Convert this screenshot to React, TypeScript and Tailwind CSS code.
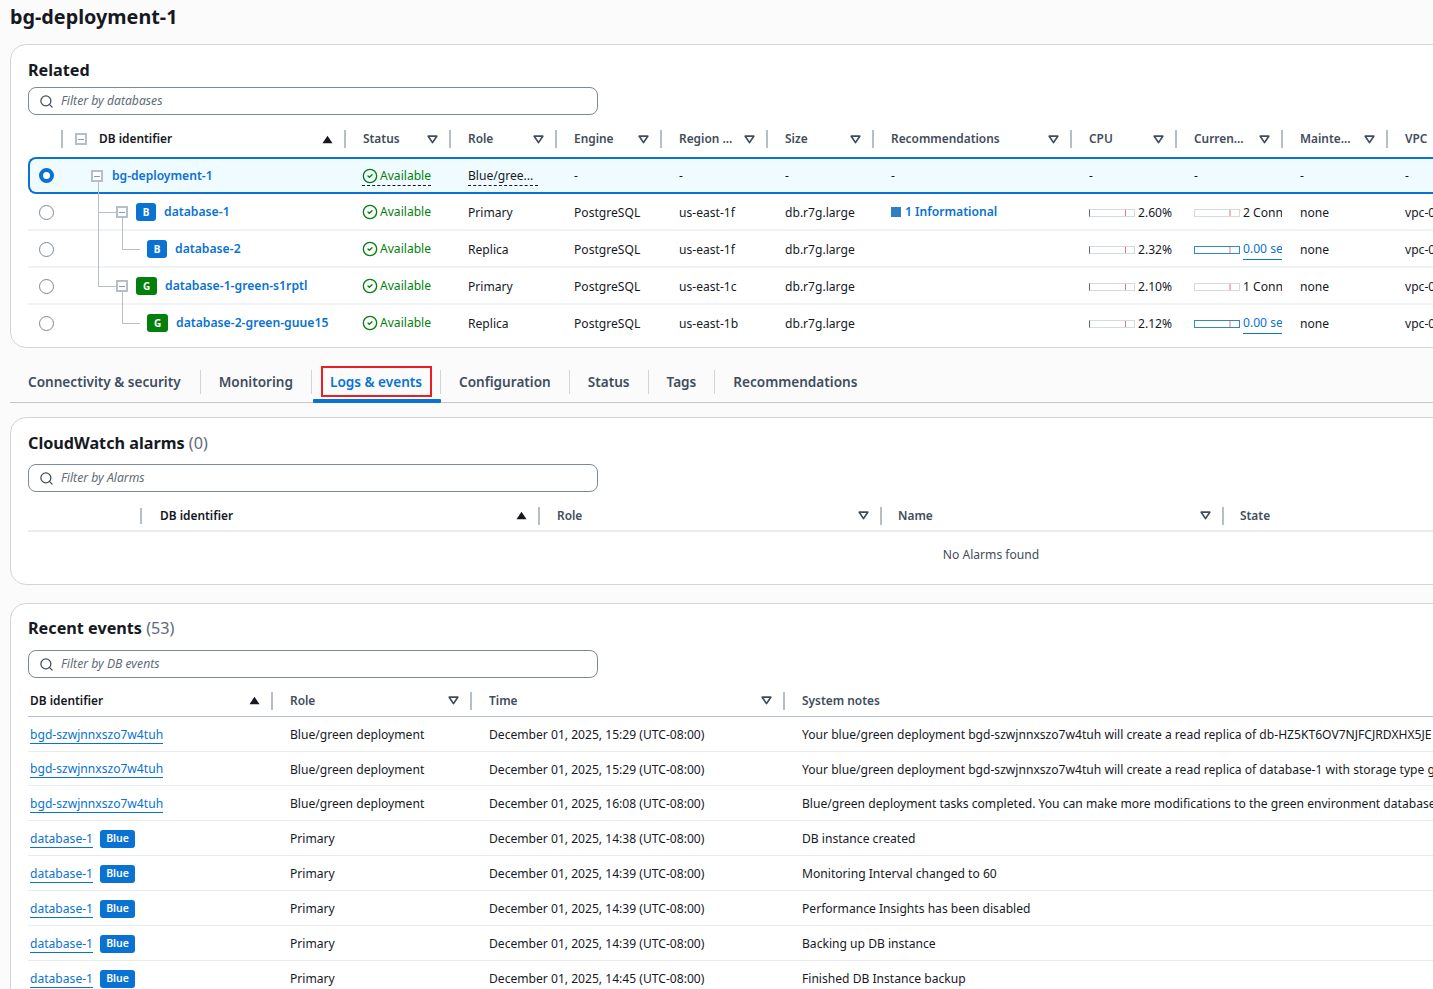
import { CircleCheck, Search } from "lucide-react"

const relatedCols = "grid grid-cols-[35px_282px_105px_106px_105px_106px_106px_198px_105px_106px_105px_200px]"
const alarmCols = "grid grid-cols-[114px_397px_342px_342px_200px]"
const eventCols = "grid grid-cols-[244px_199px_313px_900px]"

const FilterCaret = () => (
  <svg width="11" height="9" viewBox="0 0 11 9" className="shrink-0">
    <path d="M1.2 1.2h8.6L5.5 7.6z" fill="none" stroke="#414d5c" strokeWidth="1.7" strokeLinejoin="round" />
  </svg>
)

const SortCaret = () => (
  <svg width="11" height="9" viewBox="0 0 11 9" className="shrink-0">
    <path d="M5.5 .8l5 7.4H.5z" fill="#16191f" />
  </svg>
)

const Divider = () => <span className="-mr-px ml-[11px] h-[18px] w-[2px] shrink-0 bg-[#b6bec9]" />

const Head = ({ label, dark, sort, pl = "pl-[18px]", last }: { label: string; dark?: boolean; sort?: boolean; pl?: string; last?: boolean }) => (
  <div className={`flex h-full items-center ${pl}`}>
    <span className={`flex-1 truncate text-[11.9px] font-semibold ${dark ? "text-[#16191f]" : "text-[#414d5c]"}`}>{label}</span>
    {!last && (sort ? <SortCaret /> : <FilterCaret />)}
    {!last && <Divider />}
  </div>
)

const Filter = ({ text }: { text: string }) => (
  <div className="flex h-[28px] w-[570px] items-center gap-[7px] rounded-lg border border-[#7d8998] bg-white pl-[10px]">
    <Search size={15} strokeWidth={2} className="text-[#414d5c]" />
    <span className="pt-px text-[12.2px] italic text-[#5f6b7a]">{text}</span>
  </div>
)

const Minus = () => (
  <span className="relative z-10 flex h-[12px] w-[12px] shrink-0 items-center justify-center border-2 border-[#b6bec9] bg-white">
    <span className="h-px w-[6px] bg-[#8d99a8]" />
  </span>
)

const Radio = ({ on }: { on?: boolean }) =>
  on ? (
    <span className="ml-[9px] block h-[15px] w-[15px] rounded-full border-[4px] border-[#0972d3] bg-white" />
  ) : (
    <span className="ml-[11px] block h-[15px] w-[15px] rounded-full border border-[#7d8998] bg-white" />
  )

const Badge = ({ kind }: { kind: "B" | "G" }) => (
  <span className={`flex h-[18px] shrink-0 items-center justify-center rounded-[3px] text-[10px] font-bold text-white ${kind === "B" ? "w-[20px] bg-[#0972d3]" : "w-[21px] bg-[#037f0c]"}`}>
    {kind}
  </span>
)

const Status = ({ dashed }: { dashed?: boolean }) => (
  <span className={`-ml-px flex items-center gap-[2px] text-[12.1px] text-[#037f0c] ${dashed ? "border-b border-dashed border-[#16191f]" : ""}`}>
    <CircleCheck size={16} strokeWidth={2} />
    Available
  </span>
)

const Bar = ({ blue, cpu }: { blue?: boolean; cpu?: boolean }) => (
  <span className={`relative block h-[8px] w-[46px] shrink-0 border ${blue ? "border-[#2e8bc9]" : "border-[#d5dbdb]"} ${cpu ? "border-l-[#5f6b7a]" : ""}`}>
    <span className={`absolute right-[8px] top-0 h-full ${cpu ? "w-px bg-[#d97a7a]" : "w-[2px] bg-[#f4b8b8]"}`} />
  </span>
)

const related = [
  { name: "database-1", indent: "pl-[53px]", kind: "B" as const, minus: true, role: "Primary", region: "us-east-1f", rec: true, cpu: "2.60%", conn: "2 Conn", link: false },
  { name: "database-2", indent: "pl-[84px]", kind: "B" as const, minus: false, role: "Replica", region: "us-east-1f", rec: false, cpu: "2.32%", conn: "0.00 sec", link: true },
  { name: "database-1-green-s1rptl", indent: "pl-[53px]", kind: "G" as const, minus: true, role: "Primary", region: "us-east-1c", rec: false, cpu: "2.10%", conn: "1 Conn", link: false },
  { name: "database-2-green-guue15", indent: "pl-[84px]", kind: "G" as const, minus: false, role: "Replica", region: "us-east-1b", rec: false, cpu: "2.12%", conn: "0.00 sec", link: true },
]

const notes = [
  ["bgd-szwjnnxszo7w4tuh", "Blue/green deployment", "December 01, 2025, 15:29 (UTC-08:00)", "Your blue/green deployment bgd-szwjnnxszo7w4tuh will create a read replica of db-HZ5KT6OV7NJFCJRDXHX5JE"],
  ["bgd-szwjnnxszo7w4tuh", "Blue/green deployment", "December 01, 2025, 15:29 (UTC-08:00)", "Your blue/green deployment bgd-szwjnnxszo7w4tuh will create a read replica of database-1 with storage type gp"],
  ["bgd-szwjnnxszo7w4tuh", "Blue/green deployment", "December 01, 2025, 16:08 (UTC-08:00)", "Blue/green deployment tasks completed. You can make more modifications to the green environment databases"],
  ["database-1", "Primary", "December 01, 2025, 14:38 (UTC-08:00)", "DB instance created"],
  ["database-1", "Primary", "December 01, 2025, 14:39 (UTC-08:00)", "Monitoring Interval changed to 60"],
  ["database-1", "Primary", "December 01, 2025, 14:39 (UTC-08:00)", "Performance Insights has been disabled"],
  ["database-1", "Primary", "December 01, 2025, 14:39 (UTC-08:00)", "Backing up DB instance"],
  ["database-1", "Primary", "December 01, 2025, 14:45 (UTC-08:00)", "Finished DB Instance backup"],
]

const tabs = ["Connectivity & security", "Monitoring", "Logs & events", "Configuration", "Status", "Tags", "Recommendations"]

export default function App() {
  return (
    <div className="h-[989px] w-[1433px] overflow-hidden bg-[#fbfbfc] pl-[10px] font-['Noto_Sans',sans-serif] text-[12.1px] text-[#16191f]">
      <h1 className="flex h-[44px] items-start pt-[2px] text-[19.8px] font-bold leading-[30px]">bg-deployment-1</h1>

      {/* related */}
      <section className="h-[304px] w-[1560px] rounded-2xl border border-[#d1d5db] bg-white px-[17px] pt-[13px]">
        <h2 className="mb-[5px] text-[16.2px] font-bold leading-[24px]">Related</h2>
        <Filter text="Filter by databases" />
        <div className={`${relatedCols} mt-[10px] h-[32px] pb-[4px]`}>
          <div className="flex h-full items-center justify-end">
            <span className="h-[18px] w-[2px] bg-[#b6bec9]" />
          </div>
          <div className="flex h-full items-center pl-[12px]">
            <span className="mr-[12px] flex h-[12px] w-[12px] items-center justify-center border-2 border-[#b6bec9]">
              <span className="h-px w-[6px] bg-[#8d99a8]" />
            </span>
            <span className="flex-1 text-[11.9px] font-semibold">DB identifier</span>
            <SortCaret />
            <Divider />
          </div>
          <Head label="Status" />
          <Head label="Role" />
          <Head label="Engine" />
          <Head label="Region ..." />
          <Head label="Size" />
          <Head label="Recommendations" />
          <Head label="CPU" />
          <Head label="Curren..." />
          <Head label="Mainte..." />
          <Head label="VPC" last />
        </div>

        <div className="relative">
          <div className={`${relatedCols} h-[37px] items-center rounded-l-lg border-2 border-r-0 border-[#0972d3] bg-[#f0fbff] pt-[2px]`}>
            <span className="-mt-[2px]"><Radio on /></span>
            <div className="flex items-center gap-[9px] pl-[26px]">
              <Minus />
              <span className="font-semibold text-[#0972d3]">bg-deployment-1</span>
            </div>
            <div className="flex pl-[16px]"><Status dashed /></div>
            <div className="pl-[16px]"><span className="inline-block w-[70px] border-b border-dashed border-[#16191f]">Blue/gree...</span></div>
            <div className="pl-[16px]">-</div>
            <div className="pl-[16px]">-</div>
            <div className="pl-[16px]">-</div>
            <div className="pl-[16px]">-</div>
            <div className="pl-[16px]">-</div>
            <div className="pl-[16px]">-</div>
            <div className="pl-[16px]">-</div>
            <div className="pl-[16px]">-</div>
          </div>

          {related.map((r, i) => (
            <div key={r.name} className={`${relatedCols} h-[37px] items-center border-b-2 pt-[2px] ${i < 3 ? "border-[#f1f2f3]" : "border-transparent"}`}>
              <Radio />
              <div className={`flex items-center gap-[8px] ${r.indent}`}>
                {r.minus && <Minus />}
                <Badge kind={r.kind} />
                <span className="whitespace-nowrap text-[12.2px] font-semibold text-[#0972d3]">{r.name}</span>
              </div>
              <div className="flex pl-[18px]"><Status /></div>
              <div className="pl-[18px] pt-px">{r.role}</div>
              <div className="pl-[18px] pt-px">PostgreSQL</div>
              <div className="pl-[18px] pt-px">{r.region}</div>
              <div className="pl-[18px] pt-px">db.r7g.large</div>
              <div className="flex items-center gap-[4px] pl-[18px]">
                {r.rec && (
                  <>
                    <span className="h-[10px] w-[10px] bg-[#2e7fc1]" />
                    <span className="font-semibold text-[#0972d3]">1 Informational</span>
                  </>
                )}
              </div>
              <div className="flex items-center gap-[3px] pl-[18px] pt-px">
                <Bar cpu />
                <span>{r.cpu}</span>
              </div>
              <div className="flex items-center gap-[3px] overflow-hidden pl-[18px] pt-px">
                <Bar blue={r.link} />
                <span className={`whitespace-nowrap ${r.link ? "border-b border-[#0972d3] text-[#0972d3]" : ""}`}>{r.conn}</span>
              </div>
              <div className="pl-[18px] pt-px">none</div>
              <div className="pl-[18px] pt-px">vpc-0</div>
            </div>
          ))}

          <svg className="pointer-events-none absolute left-0 top-0" width="160" height="180" fill="none" stroke="#b6bec9" strokeWidth="1">
            <path d="M70.5 24V129.5H88M70.5 55.5H88" />
            <path d="M94.5 60V92.5H112M94.5 134V166.5H112" />
          </svg>
        </div>
      </section>

      {/* tabs */}
      <div className="mt-[22px] flex h-[33px] w-[1500px] items-start border-b border-[#c6c6cd] pl-[18px]">
        {tabs.map((t, i) => (
          <div key={t} className="relative flex h-[32px] items-start">
            <span className={`flex h-[24px] items-center whitespace-nowrap text-[13.58px] font-semibold ${i === 2 ? "text-[#0972d3]" : "text-[#414d5c]"} ${i === 0 ? "pr-[19px]" : "px-[18px]"}`}>
              {t}
            </span>
            {i < tabs.length - 1 && <span className="h-[24px] w-px bg-[#d1d5db]" />}
            {i === 2 && <span className="absolute -bottom-px left-[1px] right-0 h-[4px] rounded-[1px] bg-[#0972d3]" />}
            {i === 2 && <span className="absolute -top-[4px] bottom-[5px] left-[9px] right-[9px] border-2 border-[#ee1c25]" />}
          </div>
        ))}
      </div>

      {/* alarms */}
      <section className="mt-[14px] h-[168px] w-[1560px] rounded-2xl border border-[#d1d5db] bg-white px-[17px] pt-[12px]">
        <h2 className="mb-[8px] text-[16.2px] font-bold leading-[26px]">
          CloudWatch alarms <span className="font-normal text-[#5f6b7a]">(0)</span>
        </h2>
        <Filter text="Filter by Alarms" />
        <div className={`${alarmCols} mt-[9px] h-[31px] border-b-2 border-[#e9ebed]`}>
          <div className="flex h-full items-center justify-end">
            <span className="h-[16px] w-[2px] bg-[#b6bec9]" />
          </div>
          <Head label="DB identifier" dark sort />
          <Head label="Role" />
          <Head label="Name" pl="pl-[17px]" />
          <Head label="State" pl="pl-[17px]" last />
        </div>
        <div className="w-[1926px] pt-[14px] text-center text-[#414d5c]">No Alarms found</div>
      </section>

      {/* events */}
      <section className="mt-[18px] h-[500px] w-[1560px] rounded-2xl border border-[#d1d5db] bg-white px-[17px] pt-[11px]">
        <h2 className="mb-[9px] text-[16.2px] font-bold leading-[26px]">
          Recent events <span className="font-normal text-[#5f6b7a]">(53)</span>
        </h2>
        <Filter text="Filter by DB events" />
        <div className={`${eventCols} mt-[7px] h-[32px] border-b border-[#b6bec9]`}>
          <Head label="DB identifier" dark sort pl="pl-[2px]" />
          <Head label="Role" />
          <Head label="Time" />
          <Head label="System notes" last />
        </div>
        {notes.map((n, i) => (
          <div key={i} className={`${eventCols} ${i < 3 ? "h-[34.5px]" : "h-[35px]"} items-center border-b border-[#e9ebed]`}>
            <div className="flex items-center gap-[7px] pl-[2px] pt-[2px]">
              <span className="border-b border-[#0972d3] leading-[17px] text-[#0972d3]">{n[0]}</span>
              {i > 2 && <span className="flex h-[18px] w-[35px] items-center justify-center rounded-[3px] bg-[#0972d3] text-[10.5px] font-semibold text-white">Blue</span>}
            </div>
            <div className="pl-[18px] pt-[3px]">{n[1]}</div>
            <div className="pl-[18px] pt-[3px]">{n[2]}</div>
            <div className="whitespace-nowrap pl-[18px] pt-[3px]">{n[3]}</div>
          </div>
        ))}
      </section>
    </div>
  )
}
